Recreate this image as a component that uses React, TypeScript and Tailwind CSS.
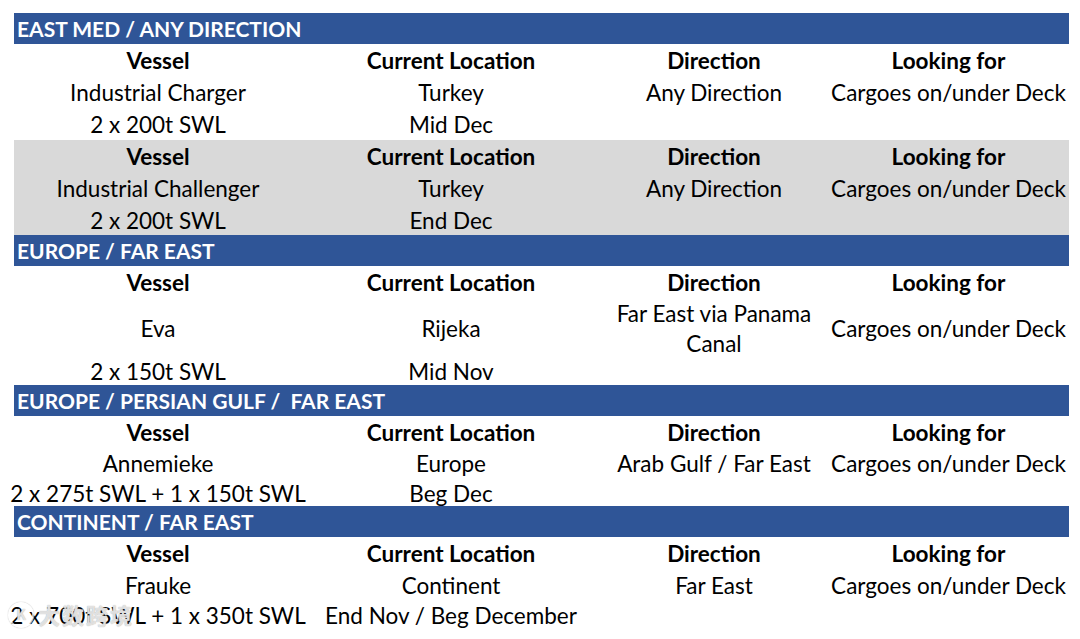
import React from 'react';

interface Row {
  h: string;
  cells: React.ReactNode[];
  bold?: boolean;
}

interface Section {
  title: string;
  blocks: { grey?: boolean; rows: Row[] }[];
}

const head = (h: string): Row => ({
  h,
  bold: true,
  cells: ['Vessel', 'Current Location', 'Direction', 'Looking for'],
});

const sections: Section[] = [
  {
    title: 'EAST MED / ANY DIRECTION',
    blocks: [
      {
        rows: [
          head('h-[32px]'),
          { h: 'h-[32px]', cells: ['Industrial Charger', 'Turkey', 'Any Direction', 'Cargoes on/under Deck'] },
          { h: 'h-[32px]', cells: ['2 x 200t SWL', 'Mid Dec', '', ''] },
        ],
      },
      {
        grey: true,
        rows: [
          head('h-[32px]'),
          { h: 'h-[32px]', cells: ['Industrial Challenger', 'Turkey', 'Any Direction', 'Cargoes on/under Deck'] },
          { h: 'h-[31px]', cells: ['2 x 200t SWL', 'End Dec', '', ''] },
        ],
      },
    ],
  },
  {
    title: 'EUROPE / FAR EAST',
    blocks: [
      {
        rows: [
          head('h-[33px]'),
          {
            h: 'h-[56px]',
            cells: [
              'Eva',
              'Rijeka',
              <span className="leading-[30px]">Far East via Panama<br />Canal</span>,
              'Cargoes on/under Deck',
            ],
          },
          { h: 'h-[30px]', cells: ['2 x 150t SWL', 'Mid Nov', '', ''] },
        ],
      },
    ],
  },
  {
    title: 'EUROPE / PERSIAN GULF /  FAR EAST',
    blocks: [
      {
        rows: [
          head('h-[31px]'),
          { h: 'h-[30px]', cells: ['Annemieke', 'Europe', 'Arab Gulf / Far East', 'Cargoes on/under Deck'] },
          { h: 'h-[29px]', cells: ['2 x 275t SWL + 1 x 150t SWL', 'Beg Dec', '', ''] },
        ],
      },
    ],
  },
  {
    title: 'CONTINENT / FAR EAST',
    blocks: [
      {
        rows: [
          head('h-[32px]'),
          { h: 'h-[30px]', cells: ['Frauke', 'Continent', 'Far East', 'Cargoes on/under Deck'] },
          { h: 'h-[29px]', cells: ['2 x 700t SWL + 1 x 350t SWL', 'End Nov / Beg December', '', ''] },
        ],
      },
    ],
  },
];

export default function App() {
  return (
    <div
      className="relative w-[1080px] h-[639px] overflow-hidden bg-white text-black pt-[13px] pl-[14px]"
      style={{ fontFamily: 'Lato, "Open Sans", sans-serif' }}
    >
      <div className="w-[1055px] flex flex-col">
        {sections.map((s) => (
          <div key={s.title} className="flex flex-col">
            <div className="h-[31px] bg-[#2f5597] text-white font-bold text-[21px] leading-[31px] pl-[3px] whitespace-pre">
              {s.title}
            </div>
            {s.blocks.map((b, bi) => (
              <div key={bi} className={b.grey ? 'bg-[#d9d9d9]' : ''}>
                {b.rows.map((r, ri) => (
                  <div
                    key={ri}
                    className={`grid grid-cols-[288px_298px_228px_241px] ${r.h} text-[22.5px] ${r.bold ? 'font-bold' : ''}`}
                  >
                    {r.cells.map((c, ci) => (
                      <div key={ci} className="flex items-center justify-center text-center whitespace-nowrap">
                        {c}
                      </div>
                    ))}
                  </div>
                ))}
              </div>
            ))}
          </div>
        ))}
      </div>

      {/* watermark */}
      <div
        className="absolute left-[8px] top-[598px] flex items-center gap-1 text-white/70 text-[22px] font-bold pointer-events-none"
        style={{ textShadow: '0 0 1px #999', fontFamily: '"Noto Sans CJK SC", sans-serif' }}
      >
        <span className="w-[26px] h-[26px] rounded-full border-2 border-white/70 flex items-center justify-center text-[14px]" style={{ boxShadow: '0 0 1px #999' }}>
          K
        </span>
        <span className="tracking-[2px]">大数跨境</span>
      </div>
    </div>
  );
}
